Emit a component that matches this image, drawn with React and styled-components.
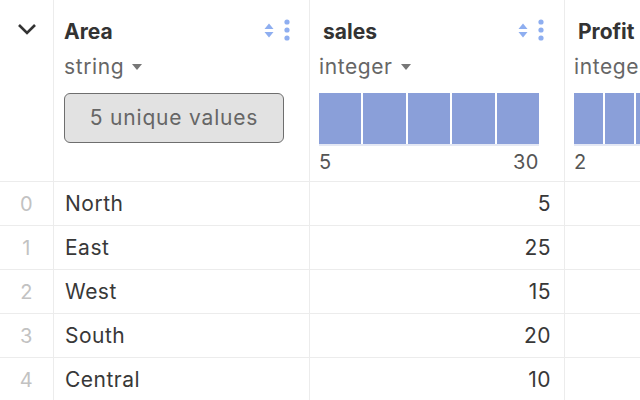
import React from 'react';
import styled, { createGlobalStyle } from 'styled-components';

const GlobalStyle = createGlobalStyle`
    html, body {
        margin: 0;
        padding: 0;
        background: #fff;
        overflow: hidden;
    }
    body {
        font-family: Inter, 'Noto Sans', sans-serif;
        color: #333;
    }
`;

const Table = styled.div`
    display: grid;
    grid-template-columns: 54px 256px 255px 200px;
    grid-template-rows: 182px repeat(5, 44px);
    width: 640px;
    height: 400px;
    overflow: hidden;
`;

const Cell = styled.div`
    box-sizing: border-box;
    border-right: 1px solid #ececec;
    border-bottom: 1px solid #ececec;
    display: flex;
    align-items: center;
    font-size: 21px;
    letter-spacing: 0.5px;
    color: #383838;
    padding: 0 ${(p) => (p.$numeric ? '13px' : '11px')};
    justify-content: ${(p) => (p.$numeric ? 'flex-end' : 'flex-start')};
    white-space: nowrap;
    overflow: hidden;
`;

const IndexCell = styled(Cell)`
    justify-content: center;
    color: #c2c2c2;
    padding: 0;
    font-size: 20px;
`;

const CornerCell = styled.div`
    box-sizing: border-box;
    border-right: 1px solid #ececec;
    border-bottom: 1px solid #ececec;
    display: flex;
    justify-content: center;
    padding-top: 22px;
`;

const HeaderCell = styled.div`
    box-sizing: border-box;
    border-right: 1px solid #ececec;
    border-bottom: 1px solid #ececec;
    display: flex;
    flex-direction: column;
    padding: 17px ${(p) => p.$padRight}px 0 ${(p) => p.$padLeft}px;
    overflow: hidden;
`;

const TitleRow = styled.div`
    height: 28px;
    display: flex;
    align-items: center;
    justify-content: space-between;
    .title {
        font-size: 21px;
        font-weight: 700;
        color: #333;
        padding-left: ${(p) => (p.$indent ? '4px' : '0')};
        white-space: nowrap;
    }
    .tools {
        display: flex;
        align-items: center;
        gap: 10px;
        margin-top: -2px;
    }
`;

const TypeRow = styled.div`
    margin-top: 7px;
    height: 28px;
    display: flex;
    align-items: center;
    gap: 8px;
    font-size: 21px;
    letter-spacing: 0.6px;
    color: #666;
    white-space: nowrap;
    .caret {
        width: 0;
        height: 0;
        border-left: 5px solid transparent;
        border-right: 5px solid transparent;
        border-top: 6px solid #777;
        margin-top: 2px;
    }
`;

const UniqueButton = styled.button`
    margin-top: 13px;
    width: 220px;
    height: 50px;
    box-sizing: border-box;
    border: 1px solid #6e6e6e;
    border-radius: 6px;
    background: #e2e2e2;
    color: #666;
    font-family: Inter, 'Noto Sans', sans-serif;
    font-size: 21px;
    letter-spacing: 0.8px;
    padding: 0 0 2px;
`;

const Histogram = styled.div`
    margin-top: 13px;
    width: ${(p) => p.$width}px;
    .bars {
        display: flex;
        gap: 2px;
        height: 51px;
        border-bottom: 2px solid #e4e8f4;
    }
    .bar {
        flex: 1;
        background: #8a9fd9;
    }
    .labels {
        display: flex;
        justify-content: space-between;
        font-size: 20px;
        letter-spacing: 0.5px;
        color: #555;
        margin-top: 4px;
        line-height: 24px;
    }
`;

const SortIcon = () => (
    <svg width="10" height="17" viewBox="0 0 10 17">
        <path d="M5 1.5 L9.5 7 L0.5 7 Z" fill="#8eaef0" />
        <path d="M5 15.5 L9.5 10 L0.5 10 Z" fill="#8eaef0" />
    </svg>
);

const DotsIcon = () => (
    <svg width="6" height="22" viewBox="0 0 6 22">
        <circle cx="3" cy="3" r="2.6" fill="#8eaef0" />
        <circle cx="3" cy="11" r="2.6" fill="#8eaef0" />
        <circle cx="3" cy="19" r="2.6" fill="#8eaef0" />
    </svg>
);

const Chevron = () => (
    <svg width="20" height="14" viewBox="0 0 20 14">
        <path d="M2 3 L10 11 L18 3" fill="none" stroke="#333" strokeWidth="2.6" />
    </svg>
);

const rows = [
    { area: 'North', sales: 5 },
    { area: 'East', sales: 25 },
    { area: 'West', sales: 15 },
    { area: 'South', sales: 20 },
    { area: 'Central', sales: 10 },
];

const Header = ({ title, type, indent, padLeft, padRight, children }) => (
    <HeaderCell $padLeft={padLeft} $padRight={padRight}>
        <TitleRow $indent={indent}>
            <span className="title">{title}</span>
            <span className="tools">
                <SortIcon />
                <DotsIcon />
            </span>
        </TitleRow>
        <TypeRow>
            {type}
            <span className="caret" />
        </TypeRow>
        {children}
    </HeaderCell>
);

const App = () => {
    return (
        <>
            <GlobalStyle />
            <Table>
                <CornerCell>
                    <Chevron />
                </CornerCell>
                <Header title="Area" type="string" padLeft={10} padRight={19}>
                    <UniqueButton>5 unique values</UniqueButton>
                </Header>
                <Header title="sales" type="integer" indent padLeft={9} padRight={20}>
                    <Histogram $width={220}>
                        <div className="bars">
                            {[0, 1, 2, 3, 4].map((i) => (
                                <div className="bar" key={i} />
                            ))}
                        </div>
                        <div className="labels">
                            <span>5</span>
                            <span>30</span>
                        </div>
                    </Histogram>
                </Header>
                <Header title="Profit" type="integer" indent padLeft={9} padRight={20}>
                    <Histogram $width={153}>
                        <div className="bars">
                            {[0, 1, 2, 3, 4].map((i) => (
                                <div className="bar" key={i} />
                            ))}
                        </div>
                        <div className="labels">
                            <span>2</span>
                            <span>9</span>
                        </div>
                    </Histogram>
                </Header>
                {rows.map((row, i) => (
                    <React.Fragment key={i}>
                        <IndexCell>{i}</IndexCell>
                        <Cell>{row.area}</Cell>
                        <Cell $numeric>{row.sales}</Cell>
                        <Cell $numeric />
                    </React.Fragment>
                ))}
            </Table>
        </>
    );
};

export default App;
